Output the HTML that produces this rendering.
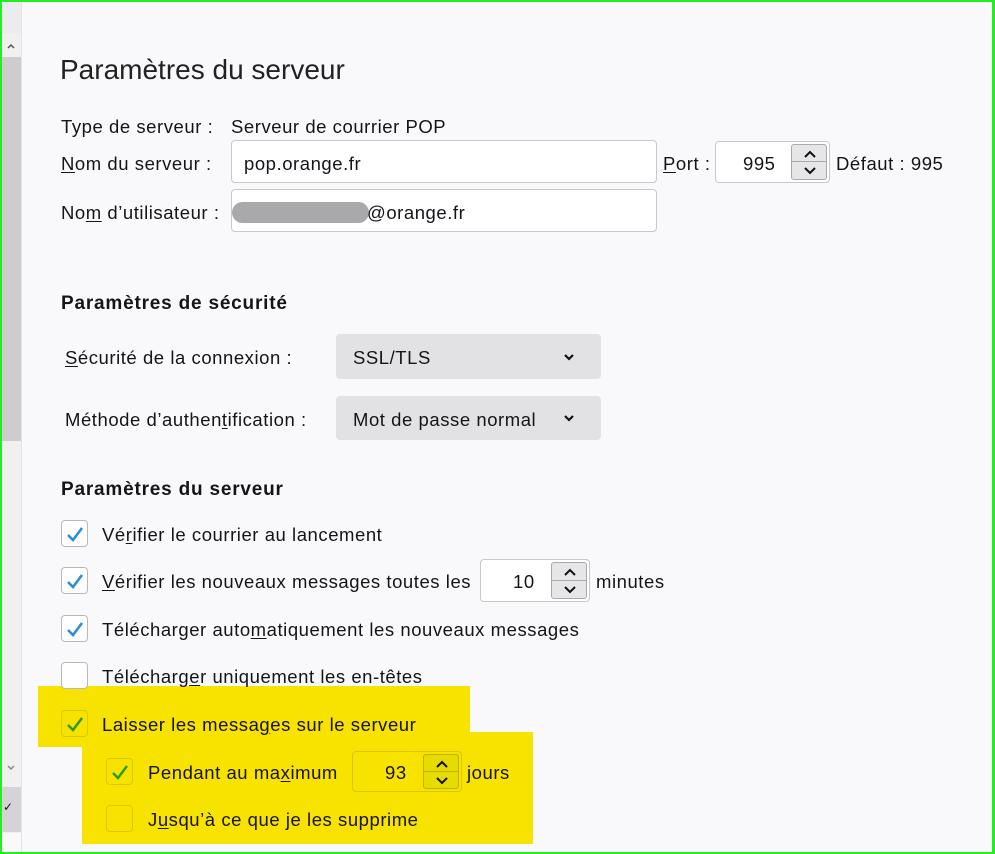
<!DOCTYPE html>
<html><head><meta charset="utf-8"><style>
*{box-sizing:border-box;margin:0;padding:0}
body{width:995px;height:854px;overflow:hidden;background:#f9f9fb;font-family:"Liberation Sans",sans-serif;color:#15141a;font-size:18.5px;letter-spacing:0.55px;position:relative}
.frame{position:absolute;inset:0;border:2px solid #22ee22;border-right-width:3px;pointer-events:none;z-index:10}
.a{position:absolute;white-space:nowrap}
.h{font-weight:bold;font-size:19px;letter-spacing:0.8px}
.inp{position:absolute;background:#fff;border:1px solid #c8c8cc;border-radius:4px}
.sel{position:absolute;background:#e2e2e4;border-radius:4px}
.cb{position:absolute;width:27px;height:27px;border:1px solid #b8b8bc;border-radius:4px;background:#fff}
.cb svg{position:absolute;left:3px;top:3px}
.spin{position:absolute;right:2px;top:2px;bottom:2px;width:36px;border:1px solid #aaa;border-radius:3px;background:#e6e6e8}
.spin i{position:absolute;left:0;right:0;height:50%;}
.spin i:first-child{top:0;border-bottom:1px solid #aaa}
.spin svg{position:absolute;left:12px}
u{text-decoration:underline;text-underline-offset:2px}
.y{position:absolute;background:#f7e200}
</style></head><body>
<div class="frame"></div>
<div style="position:absolute;left:2px;top:0;width:19px;height:33px;background:#ececee"></div>
<div style="position:absolute;left:2px;top:33px;width:19px;height:800px;background:#f0f0f0"></div>
<div style="position:absolute;left:2px;top:57px;width:19px;height:384px;background:#cdcdcd"></div>
<svg class="a" style="left:6px;top:42px" width="10" height="8"><path d="M2 6 L5 3 L8 6" stroke="#555" stroke-width="1.5" fill="none"/></svg>
<svg class="a" style="left:6px;top:764px" width="10" height="8"><path d="M2 2 L5 5 L8 2" stroke="#888" stroke-width="1.5" fill="none"/></svg>
<div style="position:absolute;left:2px;top:787px;width:19px;height:45px;background:#d4d4d6"></div>
<div class="a" style="left:3px;top:800px;font-size:12px">&#10003;</div>
<div style="position:absolute;left:21px;top:0;width:1px;height:854px;background:#e4e4e6"></div>

<div class="y" style="left:38px;top:686px;width:432px;height:61px"></div>
<div class="y" style="left:82px;top:732px;width:451px;height:112px"></div>

<div class="a" style="left:60px;top:54px;font-size:28px;font-weight:300;color:#222;letter-spacing:0">Paramètres du serveur</div>
<div class="a" style="left:61px;top:116px">Type de serveur :</div>
<div class="a" style="left:231px;top:116px">Serveur de courrier POP</div>
<div class="a" style="left:61px;top:153px"><u>N</u>om du serveur :</div>
<div class="inp" style="left:231px;top:140px;width:426px;height:43px"></div>
<div class="a" style="left:244px;top:153px">pop.orange.fr</div>
<div class="a" style="left:663px;top:153px"><u>P</u>ort :</div>
<div class="inp" style="left:715px;top:141px;width:115px;height:42px"><div class="spin"><i><svg width="12" height="10" style="top:5px"><path d="M1 7 L6 2 L11 7" stroke="#111" stroke-width="2" fill="none"/></svg></i><i style="top:50%"><svg width="12" height="10" style="top:4px"><path d="M1 2 L6 7 L11 2" stroke="#111" stroke-width="2" fill="none"/></svg></i></div></div>
<div class="a" style="left:743px;top:153px">995</div>
<div class="a" style="left:836px;top:153px">Défaut : 995</div>
<div class="a" style="left:61px;top:202px">No<u>m</u> d’utilisateur :</div>
<div class="inp" style="left:231px;top:189px;width:426px;height:43px"></div>
<div style="position:absolute;left:232px;top:202px;width:137px;height:21px;border-radius:11px;background:#a9a9ac"></div>
<div class="a" style="left:367px;top:202px">@orange.fr</div>

<div class="a h" style="left:61px;top:293px">Paramètres de sécurité</div>
<div class="a" style="left:65px;top:347px"><u>S</u>écurité de la connexion :</div>
<div class="sel" style="left:336px;top:334px;width:265px;height:45px"></div>
<div class="a" style="left:353px;top:347px">SSL/TLS</div>
<svg class="a" style="left:563px;top:353px" width="12" height="9"><path d="M2 2 L6 6 L10 2" stroke="#111" stroke-width="2.2" fill="none"/></svg>
<div class="a" style="left:65px;top:409px">Méthode d’authen<u>t</u>ification :</div>
<div class="sel" style="left:336px;top:396px;width:265px;height:44px"></div>
<div class="a" style="left:353px;top:409px">Mot de passe normal</div>
<svg class="a" style="left:563px;top:414px" width="12" height="9"><path d="M2 2 L6 6 L10 2" stroke="#111" stroke-width="2.2" fill="none"/></svg>

<div class="a h" style="left:61px;top:479px">Paramètres du serveur</div>

<div class="cb" style="left:61px;top:520px"><svg width="20" height="20"><path d="M3 11 L8 16 L17 4" stroke="#2a8fd6" stroke-width="2.6" fill="none"/></svg></div>
<div class="a" style="left:102px;top:524px">Vé<u>r</u>ifier le courrier au lancement</div>
<div class="cb" style="left:61px;top:567px"><svg width="20" height="20"><path d="M3 11 L8 16 L17 4" stroke="#2a8fd6" stroke-width="2.6" fill="none"/></svg></div>
<div class="a" style="left:102px;top:571px"><u>V</u>érifier les nouveaux messages toutes les</div>
<div class="inp" style="left:480px;top:559px;width:110px;height:43px"><div class="spin"><i><svg width="12" height="10" style="top:5px"><path d="M1 7 L6 2 L11 7" stroke="#111" stroke-width="2" fill="none"/></svg></i><i style="top:50%"><svg width="12" height="10" style="top:4px"><path d="M1 2 L6 7 L11 2" stroke="#111" stroke-width="2" fill="none"/></svg></i></div></div>
<div class="a" style="left:513px;top:571px">10</div>
<div class="a" style="left:596px;top:571px">minutes</div>
<div class="cb" style="left:61px;top:615px"><svg width="20" height="20"><path d="M3 11 L8 16 L17 4" stroke="#2a8fd6" stroke-width="2.6" fill="none"/></svg></div>
<div class="a" style="left:102px;top:619px">Télécharger auto<u>m</u>atiquement les nouveaux messages</div>
<div class="cb" style="left:61px;top:662px"></div>
<div class="a" style="left:102px;top:666px">Télécharg<u>e</u>r uniquement les en-têtes</div>

<div class="cb" style="left:61px;top:710px;background:#f7e200;border-color:#d8c800"><svg width="20" height="20"><path d="M3 11 L8 16 L17 4" stroke="#2a9a20" stroke-width="2.4" fill="none"/></svg></div>
<div class="a" style="left:102px;top:714px">Laisser les messa<u>g</u>es sur le serveur</div>
<div class="cb" style="left:106px;top:758px;background:#f7e200;border-color:#d8c800"><svg width="20" height="20"><path d="M3 11 L8 16 L17 4" stroke="#2a9a20" stroke-width="2.4" fill="none"/></svg></div>
<div class="a" style="left:148px;top:762px">Pendant au ma<u>x</u>imum</div>
<div class="inp" style="left:352px;top:751px;width:110px;height:41px;background:#f7e200;border-color:#d8c800"><div class="spin" style="background:#e6dc00;border-color:#bcb000"><i style="border-color:#bcb000"><svg width="12" height="10" style="top:5px"><path d="M1 7 L6 2 L11 7" stroke="#111" stroke-width="2" fill="none"/></svg></i><i style="top:50%"><svg width="12" height="10" style="top:4px"><path d="M1 2 L6 7 L11 2" stroke="#111" stroke-width="2" fill="none"/></svg></i></div></div>
<div class="a" style="left:385px;top:762px">93</div>
<div class="a" style="left:467px;top:762px">jours</div>
<div class="cb" style="left:106px;top:805px;background:#f7e200;border-color:#d8c800"></div>
<div class="a" style="left:148px;top:809px">J<u>u</u>squ’à ce que je les supprime</div>
</body></html>
